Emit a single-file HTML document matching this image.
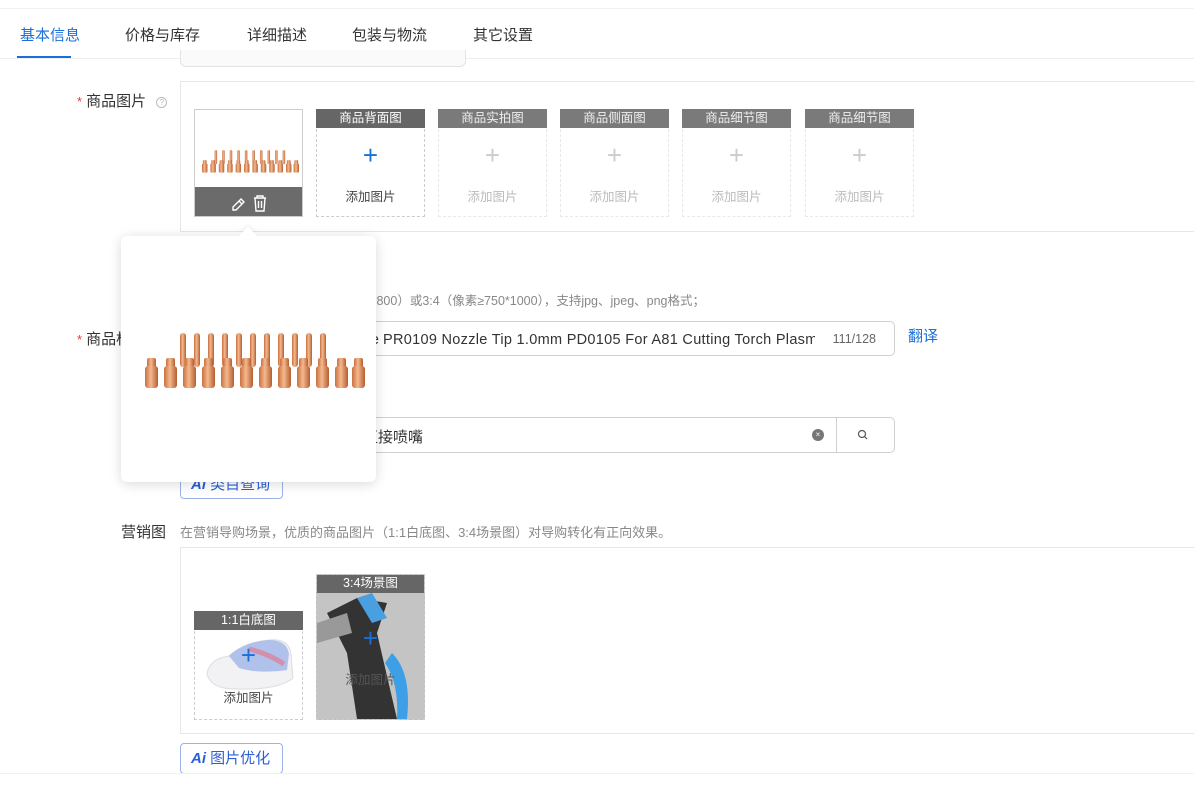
<!DOCTYPE html>
<html><head><meta charset="utf-8">
<style>
*{margin:0;padding:0;box-sizing:border-box}
body{width:1194px;height:811px;overflow:hidden;background:#fff;font-family:"Liberation Sans","Noto Sans CJK SC",sans-serif;color:#333;position:relative}
.a{position:absolute}
.tab{position:absolute;top:24px;font-size:15px;color:#333}
.box{position:absolute;border:1px solid #e6e6e6;background:#fff}
.tile{position:absolute;width:109px;border:1px dashed #ccc;background:#fff}
.tile.l{border-color:#e8e8e8}
.hd{height:19px;background:#666;color:#fff;font-size:12.5px;text-align:center;line-height:19px;margin:-1px -1px 0 -1px}
.tile.l .hd{background:#7a7a7a;color:#eee}
.plus{position:absolute;left:0;right:0;text-align:center;font-size:26px;color:#1a6fd8;font-weight:300}
.add{position:absolute;left:0;right:0;text-align:center;font-size:12.5px;color:#444}
.tile.l .plus{color:#ccc}.tile.l .add{color:#bbb}
.lbl{position:absolute;font-size:15px;color:#333}
.hint{position:absolute;font-size:13px;color:#888;white-space:nowrap}
.star{color:#e4393c;margin-right:4px;font-size:13px}
.inp{position:absolute;border:1px solid #d0d0d0;border-radius:5px;background:#fff}
.aibtn{position:absolute;border:1px solid #9bb3e8;border-radius:4px;color:#2b5fd6;font-size:15px;padding-left:10px;line-height:30px}
</style></head><body>
<svg width="0" height="0" style="position:absolute">
<defs>
<linearGradient id="cu" x1="0" x2="1"><stop offset="0" stop-color="#c9703f"/><stop offset=".45" stop-color="#f5b88e"/><stop offset="1" stop-color="#b35e30"/></linearGradient>
<g id="pin"><rect x="0" y="0" width="6" height="34" rx="3" fill="url(#cu)"/></g>
<g id="noz"><rect x="2" y="0" width="9" height="10" rx="2" fill="url(#cu)"/><rect x="0" y="8" width="13" height="22" rx="3" fill="url(#cu)"/></g>
</defs></svg>
<div class="a" style="left:0;top:8px;width:1194px;height:1px;background:#f0f0f0"></div>
<div class="tab" style="left:20px;color:#1a6fd8">基本信息</div>
<div class="tab" style="left:125px">价格与库存</div>
<div class="tab" style="left:247px">详细描述</div>
<div class="tab" style="left:352px">包装与物流</div>
<div class="tab" style="left:473px">其它设置</div>
<div class="a" style="left:17px;top:56px;width:54px;height:2px;background:#1a6fd8"></div>
<div class="a" style="left:0;top:58px;width:1194px;height:1px;background:#eee"></div>
<div class="a" style="left:180px;top:50px;width:286px;height:17px;border:1px solid #e3e3e3;border-top:none;border-radius:0 0 6px 6px;background:#fafafa"></div>

<div class="lbl" style="left:77px;top:90px"><span class="star">*</span>商品图片 <span style="display:inline-block;width:11px;height:11px;border:1px solid #bbb;border-radius:50%;font-size:8px;color:#bbb;text-align:center;line-height:10px;margin-left:6px;vertical-align:1px">?</span></div>
<div class="box" style="left:180px;top:81px;width:1020px;height:151px"></div>
<div class="a" style="left:194px;top:109px;width:109px;height:108px;border:1px solid #ccc;background:#fff;overflow:hidden">
<svg width="107" height="78" style="position:absolute;left:0;top:0">
<g transform="translate(7,40) scale(0.42)">
<use href="#pin" x="30"/><use href="#pin" x="48"/><use href="#pin" x="66"/><use href="#pin" x="84"/><use href="#pin" x="102"/><use href="#pin" x="120"/><use href="#pin" x="138"/><use href="#pin" x="156"/><use href="#pin" x="174"/><use href="#pin" x="192"/>
<g transform="translate(0,24)"><use href="#noz" x="0"/><use href="#noz" x="20"/><use href="#noz" x="40"/><use href="#noz" x="60"/><use href="#noz" x="80"/><use href="#noz" x="100"/><use href="#noz" x="120"/><use href="#noz" x="140"/><use href="#noz" x="160"/><use href="#noz" x="180"/><use href="#noz" x="200"/><use href="#noz" x="218"/></g>
</g></svg>
<div class="a" style="left:0;top:77px;width:107px;height:30px;background:#6b6b6b">
<svg width="107" height="30"><g fill="none" stroke="#fff" stroke-width="1.4"><path d="M38 20 L38 23 L41 23 L49 15 L46 12 Z M44 14 L47 17"/><path d="M59 11 H71 M62 11 V9 H68 V11 M60 11 L61 24 H69 L70 11 M63.5 14 V21 M66.5 14 V21"/></g></svg></div>
</div>
<div class="tile" style="left:316px;top:109px;height:108px"><div class="hd">商品背面图</div><div class="plus" style="top:30px">+</div><div class="add" style="top:76px">添加图片</div></div>
<div class="tile l" style="left:438px;top:109px;height:108px"><div class="hd">商品实拍图</div><div class="plus" style="top:30px">+</div><div class="add" style="top:76px">添加图片</div></div>
<div class="tile l" style="left:560px;top:109px;height:108px"><div class="hd">商品侧面图</div><div class="plus" style="top:30px">+</div><div class="add" style="top:76px">添加图片</div></div>
<div class="tile l" style="left:682px;top:109px;height:108px"><div class="hd">商品细节图</div><div class="plus" style="top:30px">+</div><div class="add" style="top:76px">添加图片</div></div>
<div class="tile l" style="left:805px;top:109px;height:108px"><div class="hd">商品细节图</div><div class="plus" style="top:30px">+</div><div class="add" style="top:76px">添加图片</div></div>

<div class="hint" style="right:489px;top:290px;font-size:12.5px">图片尺寸建议1:1（像素≥800*800）或3:4（像素≥750*1000），支持jpg、jpeg、png格式；</div>
<div class="lbl" style="left:77px;top:328px"><span class="star">*</span>商品标题</div>
<div class="inp" style="left:180px;top:321px;width:715px;height:35px;overflow:hidden">
<div class="a" style="right:515px;top:10px;font-size:14.5px;color:#333;white-space:nowrap">Plasma Cutting Nozzle</div>
<div class="a" style="left:202px;top:10px;font-size:14.5px;color:#333;white-space:nowrap;width:432px;overflow:hidden;letter-spacing:0.3px">PR0109 Nozzle Tip 1.0mm PD0105 For A81 Cutting Torch Plasma</div>
<div class="a" style="right:18px;top:10px;font-size:12.5px;color:#666">111/128</div></div>
<div class="a" style="left:908px;top:325px;font-size:15px;color:#1a6fd8">翻译</div>
<div class="inp" style="left:180px;top:417px;width:715px;height:36px"><div class="a" style="right:471px;top:8px;font-size:15px;white-space:nowrap">等离子切割直接喷嘴</div>
<div class="a" style="left:631px;top:11px;width:12px;height:12px;border-radius:50%;background:#777;color:#fff;font-size:8px;text-align:center;line-height:12px">×</div>
<div class="a" style="left:655px;top:0;width:1px;height:34px;background:#d0d0d0"></div>
<svg class="a" style="left:676px;top:11px" width="12" height="12"><circle cx="5" cy="5" r="3.5" fill="none" stroke="#555" stroke-width="1.2"/><path d="M7.5 7.5 L10 10" stroke="#555" stroke-width="1.2"/></svg></div>
<div class="aibtn" style="left:180px;top:469px;width:103px;height:30px"><b style="font-style:italic">Ai</b> 类目查询</div>

<div class="a" style="left:121px;top:236px;width:255px;height:246px;background:#fff;border-radius:6px;box-shadow:0 2px 12px rgba(0,0,0,.15)">
<svg width="255" height="246"><g transform="translate(24,97)">
<use href="#pin" x="35"/><use href="#pin" x="49"/><use href="#pin" x="63"/><use href="#pin" x="77"/><use href="#pin" x="91"/><use href="#pin" x="105"/><use href="#pin" x="119"/><use href="#pin" x="133"/><use href="#pin" x="147"/><use href="#pin" x="161"/><use href="#pin" x="175"/>
<g transform="translate(0,25)"><use href="#noz" x="0"/><use href="#noz" x="19"/><use href="#noz" x="38"/><use href="#noz" x="57"/><use href="#noz" x="76"/><use href="#noz" x="95"/><use href="#noz" x="114"/><use href="#noz" x="133"/><use href="#noz" x="152"/><use href="#noz" x="171"/><use href="#noz" x="190"/><use href="#noz" x="207"/></g>
</g></svg></div>
<div class="a" style="left:242px;top:229px;width:12px;height:12px;background:#fff;transform:rotate(45deg);box-shadow:-2px -2px 4px rgba(0,0,0,.05)"></div>

<div class="lbl" style="left:121px;top:521px">营销图</div>
<div class="hint" style="left:180px;top:522px">在营销导购场景，优质的商品图片（1:1白底图、3:4场景图）对导购转化有正向效果。</div>
<div class="box" style="left:180px;top:547px;width:1020px;height:187px"></div>
<div class="tile" style="left:194px;top:611px;height:109px"><div class="hd">1:1白底图</div>
<svg class="a" style="left:4px;top:22px" width="100" height="62"><path d="M8 40 Q10 25 30 22 Q45 8 70 6 Q90 4 92 20 L94 44 Q80 56 40 55 Q12 56 8 40Z" fill="#f2f2f4" stroke="#ddd"/><path d="M30 22 Q45 8 70 6 Q88 6 90 20 L88 36 Q60 40 40 34 Z" fill="#9fb4e8" opacity=".8"/><path d="M50 15 Q70 20 85 30" stroke="#e37a8f" stroke-width="5" fill="none" opacity=".7"/></svg>
<div class="plus" style="top:28px">+</div><div class="add" style="top:75px">添加图片</div></div>
<div class="tile" style="left:316px;top:574px;height:146px;overflow:hidden;background:#bdbdbd"><div class="hd" style="position:relative;z-index:2">3:4场景图</div>
<svg class="a" style="left:0;top:18px" width="108" height="126"><rect width="108" height="126" fill="#c4c4c4"/><path d="M10 20 L40 5 L70 10 L60 40 L80 126 L40 126 L30 60 Z" fill="#333"/><path d="M40 5 L55 0 L70 25 L55 30Z" fill="#4a9fe0"/><path d="M75 60 Q95 80 90 126 L80 126 Q82 90 68 70Z" fill="#3da0e6"/><path d="M0 30 L30 20 L35 40 L0 50Z" fill="#999"/></svg>
<div class="plus" style="top:48px;z-index:3">+</div><div class="add" style="top:94px;z-index:3;color:#555">添加图片</div></div>
<div class="aibtn" style="left:180px;top:743px;width:103px;height:31px"><b style="font-style:italic">Ai</b> 图片优化</div>
<div class="a" style="left:0;top:773px;width:1194px;height:38px;background:#fff;border-top:1px solid #f0f0f0"></div>
</body></html>
